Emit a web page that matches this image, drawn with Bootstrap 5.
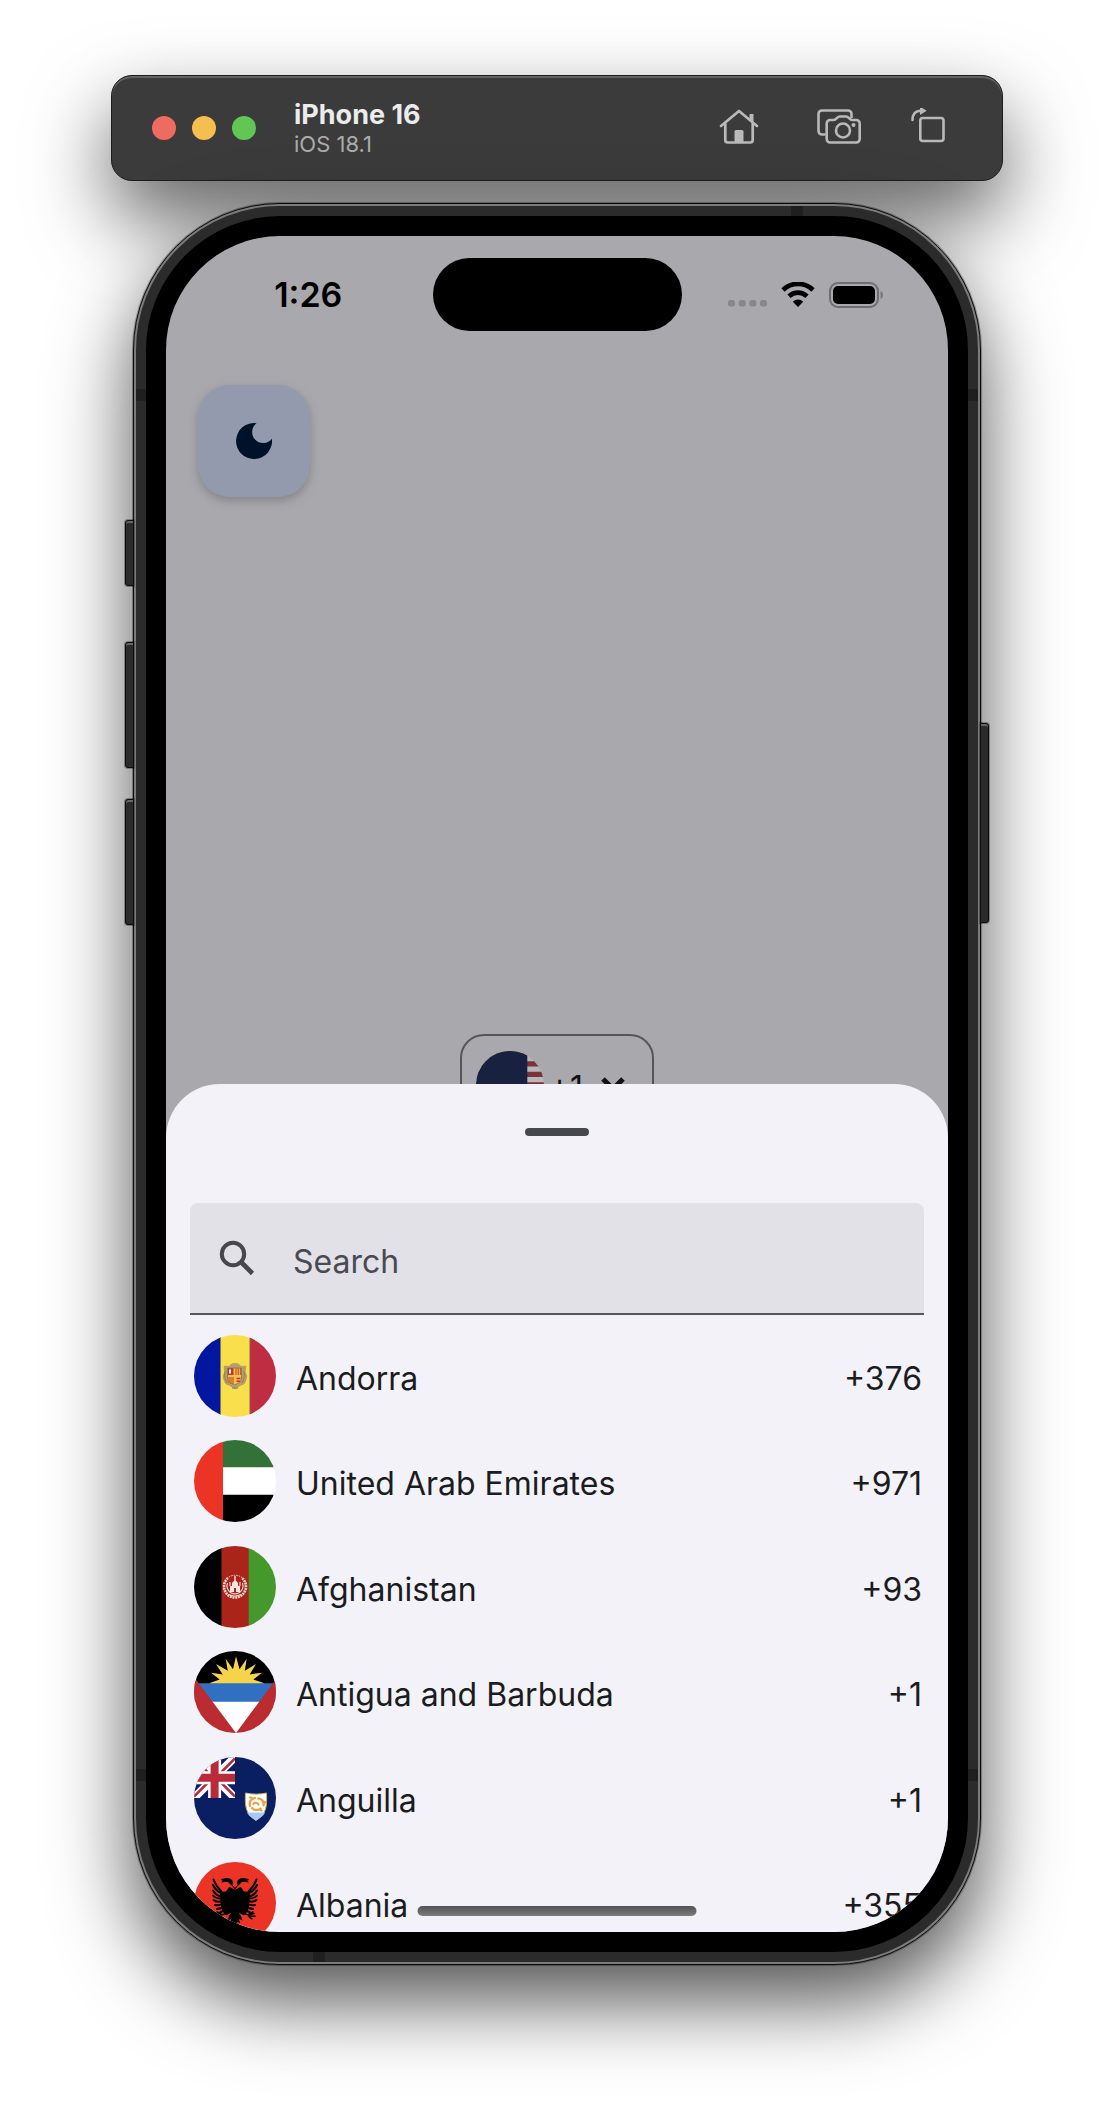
<!DOCTYPE html>
<html lang="en">
<head>
<meta charset="utf-8">
<meta name="viewport" content="width=device-width, initial-scale=1">
<title>iPhone 16 simulator – country picker</title>
<link href="https://cdn.jsdelivr.net/npm/bootstrap@5.3.0/dist/css/bootstrap.min.css" rel="stylesheet">
<style>
  body { font-family: Inter, "Liberation Sans", sans-serif; background: #fff; color: #1b1c20; }
  .stage { padding: 75px 0 150px; overflow: hidden; }
  .simbar { max-width: 892px; height: 106px; padding: 0 57px 0 40px; border-radius: 21px; background: #3b3b3b;
    border: 1px solid #1c1c1c; box-shadow: inset 0 2px 0 #636363, 0 36px 80px rgba(0,0,0,.62); }
  .simbar .btn { --bs-btn-padding-x: 0; --bs-btn-padding-y: 0; border: 0; line-height: 1; color: #b9b9b9; }
  .light { width: 24px; height: 24px; }
  .light-r { background: #ed6b60; } .light-y { background: #f5bf4f; } .light-g { background: #62c655; }
  .device { margin-left: 38px; }
  .device-name { font-size: 27px; line-height: 32px; color: #ececec; }
  .device-os { font-size: 22px; line-height: 26px; color: #ababab; }
  .sim-tools { gap: 50px; }

  .phone { max-width: 848px; margin-top: 22px; padding: 2px; background: #7b7b7b; border: 1px solid #0c0c0c;
    border-radius: 147px; box-shadow: 0 0 0 1px rgba(0,0,0,.3), 0 36px 80px rgba(0,0,0,.68); }
  .shell { border: 10px solid #2b2b2b; border-radius: 144px; background: #000; padding: 20px; }
  .display { aspect-ratio: 782 / 1696; border-radius: 114px; background: #a9a8ad; overflow: hidden; }
  .hw { width: 9px; background: #2b2b2b; border: 1px solid #0c0c0c; box-shadow: 0 0 0 1px rgba(0,0,0,.3), inset 0 2px 0 #666; }
  .hw-left { left: -9px; border-radius: 3px 0 0 3px; }
  .hw-right { right: -9px; border-radius: 0 3px 3px 0; }
  .hw-action { top: 316px; height: 66px; }
  .hw-up { top: 438px; height: 126px; }
  .hw-down { top: 595px; height: 126px; }
  .hw-power { top: 519px; height: 200px; }
  .band { background: #1f1f1f; }
  .band-side { width: 10px; height: 12px; }
  .band-edge { width: 12px; height: 10px; }
  .band-l { left: 2px; } .band-r { right: 2px; }
  .band-hi { top: 185px; } .band-lo { bottom: 183px; }
  .band-top { top: 2px; right: 177px; } .band-bottom { bottom: 2px; left: 179px; }

  .statusbar { padding-top: 22px; color: #000; }
  .clock { font-size: 34px; font-weight: 600; line-height: 40px; padding-left: 18px; }
  .island { width: 249px; height: 73px; background: #000; }
  .signals { padding-right: 18px; gap: 14px; }
  .app { height: 848px; }
  .theme-row { padding: 54px 32px 0; }
  .theme-btn { width: 112px; height: 112px; border: 0; border-radius: 32px; background: #939aad; color: #00112a; box-shadow: 0 4px 10px rgba(90,90,90,.45); }
  .theme-btn:hover { background: #8a92a6; }
  .pill { height: 102px; padding: 0 27px 0 14px; border: 2px solid #55555b; border-radius: 24px; background: transparent; font-size: 32px; color: #111216; margin-bottom: -52px; }
  .pill span { padding: 6px 18px 0 5px; }

  .sheet { background: #f3f2f9; border-radius: 54px 54px 0 0; padding: 44px 24px 0; }
  .grip { width: 64px; height: 8px; background: #47484d; margin: 0 auto 67px; }
  .searchbox { height: 112px; background: #e2e1e7; border-bottom: 2px solid #55575b; border-radius: 8px 8px 0 0; padding-left: 29px; color: #47484c; }
  .searchbox .form-control { background: transparent; border: 0; border-radius: 0; box-shadow: none; font-size: 32px; line-height: 40px; color: #1b1c20; padding: 8px 0 0 38px; }
  .searchbox .form-control::placeholder { color: #4a4b50; opacity: 1; }
  .countries { margin-top: 8px; height: 633px; flex-shrink: 0; }
  .country { border: 0; background: transparent; padding: 0 0 0 4px; font-size: 32px; line-height: 40px; color: #1b1c20; }
  .country .label { padding: 6px 0 0 20px; }
  .country .code { padding: 6px 2px 0 0; }
  .flag { width: 82px; height: 82px; }
  .flag-sm { width: 68px; height: 68px; }
  .homebar { width: 279px; height: 10px; bottom: 16px; background: linear-gradient(#535355, #7b7b7d); }
</style>
</head>
<body>
<main class="stage d-flex flex-column align-items-center">

  <header class="simbar w-100 d-flex align-items-center">
    <div class="d-flex gap-3">
      <span class="light light-r rounded-circle"></span>
      <span class="light light-y rounded-circle"></span>
      <span class="light light-g rounded-circle"></span>
    </div>
    <div class="device">
      <div class="device-name fw-bold">iPhone 16</div>
      <div class="device-os">iOS 18.1</div>
    </div>
    <div class="sim-tools d-flex ms-auto">
      <button class="btn" type="button" aria-label="Home">
        <svg width="48" height="40" viewBox="0 0 48 40" fill="none" stroke="currentColor" stroke-width="2.7" stroke-linecap="round" stroke-linejoin="round">
          <path d="M2 18 20 3 38 18M6.300 15v17a2.500 2.500 0 0 0 2.500 2.500h22.400a2.500 2.500 0 0 0 2.500-2.500V15"/>
          <path d="M30.500 6.500a.5.500 0 0 1 .5-.5h3a.5.500 0 0 1 .5.500V15l-4-3z" fill="currentColor" stroke="none"/><path d="M15.500 35V23.500a1.500 1.500 0 0 1 1.500-1.500h6a1.500 1.500 0 0 1 1.500 1.500V35z" fill="currentColor" stroke="none"/>
        </svg>
      </button>
      <button class="btn" type="button" aria-label="Screenshot">
        <svg width="44" height="40" viewBox="0 0 44 40" fill="none" stroke="currentColor" stroke-width="2.600" stroke-linejoin="round">
          <path d="M8.500 26.500H5A3.500 3.500 0 0 1 1.500 23V6A3.500 3.500 0 0 1 5 2.500h26A3.500 3.500 0 0 1 34.500 6v4"/>
          <path d="M13.200 12h3.500c2.800 0 3.500-3.500 6-3.500h6.500c2.500 0 3.200 3.500 6 3.500h4a3.500 3.500 0 0 1 3.500 3.500V31a3.500 3.500 0 0 1-3.500 3.500h-26A3.500 3.500 0 0 1 9.700 31V15.500a3.500 3.500 0 0 1 3.500-3.500z"/>
          <circle cx="26" cy="22.500" r="7"/><circle cx="36.500" cy="17" r="2" fill="currentColor" stroke="none"/>
        </svg>
      </button>
      <button class="btn" type="button" aria-label="Rotate">
        <svg width="34" height="40" viewBox="0 0 34 40" fill="none" stroke="currentColor" stroke-width="2.600" stroke-linecap="round">
          <rect x="9.300" y="10" width="23.200" height="23" rx="2.500"/>
          <path d="M1.500 12C1.300 6.500 4 2.800 10 2.800"/><path d="M9-1.500 15.700 2.800 9 7z" fill="currentColor" stroke="none"/>
        </svg>
      </button>
    </div>
  </header>

  <section class="phone w-100 position-relative">
    <span class="hw hw-left hw-action position-absolute"></span>
    <span class="hw hw-left hw-up position-absolute"></span>
    <span class="hw hw-left hw-down position-absolute"></span>
    <span class="hw hw-right hw-power position-absolute"></span>
    <div class="shell">
      <div class="display position-relative d-flex flex-column">
        <div class="app d-flex flex-column flex-shrink-0">
          <div class="statusbar d-flex align-items-center">
            <div class="clock col text-center">1:26</div>
            <div class="island rounded-pill"></div>
            <div class="signals col d-flex justify-content-center align-items-center">
              <svg width="39" height="26" viewBox="0 0 39 26" fill="#87868a"><rect y="18" width="7" height="6.500" rx="2.500"/><rect x="10.700" y="18" width="7" height="6.500" rx="2.500"/><rect x="21.300" y="18" width="7" height="6.500" rx="2.500"/><rect x="32" y="18" width="7" height="6.500" rx="2.500"/></svg>
              <svg width="34" height="26" viewBox="0 0 34 26"><path d="M2 8a21.500 21.500 0 0 1 30 0M8 14.200a13 13 0 0 1 18 0" fill="none" stroke="#000" stroke-width="4.800"/><path d="M17 25 11.800 19.700a7.500 7.500 0 0 1 10.400 0z"/></svg>
              <svg width="55" height="28" viewBox="0 0 55 28"><rect x="1" y="2" width="48" height="24" rx="8" fill="none" stroke="#6e6d71" stroke-width="2"/><rect x="4" y="5" width="42" height="18" rx="5"/><path d="M51.500 10c3.300 1.200 3.300 6.800 0 8z" fill="#77767a"/></svg>
            </div>
          </div>
          <div class="theme-row">
            <button class="theme-btn d-flex align-items-center justify-content-center" type="button" aria-label="Dark mode">
              <svg width="36" height="36" viewBox="0 0 36 36" fill="currentColor"><path d="M20.600.200A18 18 0 1 0 35.900 15.700 11 11 0 1 1 20.600.200z"/></svg>
            </button>
          </div>
          <button class="pill mt-auto mx-auto d-flex align-items-center flex-shrink-0" type="button" aria-label="Country code +1">
            <svg class="flag-sm rounded-circle" viewBox="0 0 68 68"><path fill="#b7b6ba" d="M0 0h68v68H0z"/><path stroke="#7c3236" stroke-width="5.300" d="M0 2.300h68M0 12.800h68M0 23.300h68M0 33.800h68M0 44.300h68M0 54.800h68M0 65.300h68"/><path fill="#18213f" d="M0 0h51.300v37H0z"/></svg>
            <span>+1</span>
            <svg width="24" height="16" viewBox="0 0 24 16" fill="none" stroke="currentColor" stroke-width="5"><path d="m2 2 10 10L22 2"/></svg>
          </button>
        </div>

        <section class="sheet position-relative flex-grow-1 d-flex flex-column" aria-label="Select country">
          <div class="grip rounded-pill flex-shrink-0"></div>
          <div class="searchbox d-flex align-items-center flex-shrink-0">
            <label for="country-search"><svg width="36" height="36" viewBox="0 0 36 36" fill="none" stroke="currentColor" stroke-width="4"><circle cx="14" cy="14" r="11.200"/><path d="m22 22 11.500 11.500" stroke-width="4.600"/></svg></label>
            <input id="country-search" class="form-control" type="text" placeholder="Search">
          </div>
          <div class="countries list-group list-group-flush">
            <button type="button" class="country list-group-item list-group-item-action d-flex align-items-center flex-fill">
              <svg class="flag rounded-circle" viewBox="0 0 82 82">
                <path fill="#0216a0" d="M0 0h27v82H0z"/><path fill="#f9df4b" d="M26.500 0H56v82H26.500z"/><path fill="#be2d41" d="M56 0h26v82H56z"/><path stroke="#8a7a3c" stroke-width=".8" d="M26.500 0v82M55.800 0v82"/>
                <path fill="#b7a068" d="M30 31c3-1 4 1 6-1s4-2 5-2 3 0 5 2 3 0 6 1c1 3-1 4 0 7 2 3 1 5 0 8-1 4-4 4-6 5s-3 3-5 3-3-2-5-3-5-1-6-5c-1-3-2-5 0-8 1-3-1-4 0-7z"/>
                <path fill="#f2c14a" d="M33.500 33h14v10c0 4-3 5-7 7-4-2-7-3-7-7z"/><path fill="#c8312b" d="M33.500 33h6v7h-6z"/><path fill="#fff" d="M35 34.500h2v4h-2z"/>
                <path stroke="#d05a2a" stroke-width="1.300" d="M42 33v7M44.300 33v7M46.500 33v7M35 42v6M37 42v7M39 42v7"/><path stroke="#c8312b" stroke-width="1.500" d="M42.500 43.500h4M42.500 46.200h4"/><path stroke="#8b7a4c" fill="none" stroke-width=".9" d="M33.500 33h14v10c0 4-3 5-7 7-4-2-7-3-7-7zM31 36c-1 4 0 9 2 12M50 36c1 4 0 9-2 12M38 53h6"/>
              </svg>
              <span class="label">Andorra</span><span class="code ms-auto">+376</span>
            </button>
            <button type="button" class="country list-group-item list-group-item-action d-flex align-items-center flex-fill">
              <svg class="flag rounded-circle" viewBox="0 0 82 82"><path fill="#fff" d="M0 0h82v82H0z"/><path fill="#327238" d="M28 0h54v27.300H28z"/><path d="M28 54.700h54V82H28z"/><path fill="#eb3425" d="M0 0h29v82H0z"/></svg>
              <span class="label">United Arab Emirates</span><span class="code ms-auto">+971</span>
            </button>
            <button type="button" class="country list-group-item list-group-item-action d-flex align-items-center flex-fill">
              <svg class="flag rounded-circle" viewBox="0 0 82 82"><path d="M0 0h28v82H0z"/><path fill="#ab241a" d="M27.500 0H55v82H27.500z"/><path fill="#45982b" d="M54.700 0H82v82H54.700z"/>
                <g fill="none" stroke="#ecd2cc"><path stroke-width="2.600" stroke-dasharray="2 .7" d="M34 32a11 11 0 1 0 14 0"/><path stroke-width="1" stroke-dasharray="1.500 1" d="M33 32.500a11.500 11.500 0 0 1 16 0"/><path stroke-width="1.200" d="M33.500 37a8 8 0 1 0 15 0M35 48.500c4 2 8 2 12 0M36 36v4M46 36v4"/></g>
                <path fill="#f5e6e2" d="M36 46v-6h2v-3l3-3.500 3 3.500v3h2v6zM40.300 30h1.400v4h-1.400z"/><path fill="#ab241a" d="M40 42h2v4h-2z"/>
              </svg>
              <span class="label">Afghanistan</span><span class="code ms-auto">+93</span>
            </button>
            <button type="button" class="country list-group-item list-group-item-action d-flex align-items-center flex-fill">
              <svg class="flag rounded-circle" viewBox="0 0 82 82"><path d="M0 0h82v33H0z"/><path fill="#f6d44a" d="m15.700 32 10-3.400L17 21.700l11.700 1.700L22 13l11.800 6.700-2.100-12 7.300 10.500L42 5.300l3.500 12.900 7.200-10.500-1.900 12L62 13l-6.300 10.400L68 21.700l-8.700 6.900L69.700 32v1h-54z"/><path fill="#2f70c1" d="M0 32.300h82V51H0z"/><path fill="#fff" d="M0 50.800h82V82H0z"/><path fill="#bb2c30" d="M0 26l42 56H0zM83.500 26 42 82h41.500z"/></svg>
              <span class="label">Antigua and Barbuda</span><span class="code ms-auto">+1</span>
            </button>
            <button type="button" class="country list-group-item list-group-item-action d-flex align-items-center flex-fill">
              <svg class="flag rounded-circle" viewBox="0 0 82 82"><path fill="#0a1f62" d="M0 0h82v82H0z"/>
                <svg width="41" height="41" viewBox="0 0 41 41"><path stroke="#fff" stroke-width="8" d="m0 0 41 41M41 0 0 41"/><path stroke="#b92b39" stroke-width="2.600" d="M0 1.500l20 20M21 19.500l20 20M41 1.500l-20 20M20 19.500l-20 20"/><path stroke="#fff" stroke-width="13" d="M20.600 0v41M0 20.700h41"/><path stroke="#b92b39" stroke-width="8" d="M20.600 0v41M0 20.700h41"/></svg>
                <path fill="#fff" stroke="#c9b05a" stroke-width="1" d="M51.500 36c7 1.500 14 1.500 21 0 .5 12 .5 21-10.500 27.500C51 57 51 48 51.500 36z"/><path fill="#a4cbf7" d="M53 55.500h18.200c-1.700 3-5 5.500-9.200 7.500-4.200-2-7.500-4.500-9-7.500z"/>
                <path fill="none" stroke="#f0a03c" stroke-width="2.200" stroke-linecap="round" d="M56 49c-1-4 1-7 5-8M58.500 41l-2.500-.5M64 41.500c4 0 6 3 5.500 7M70 47l1-2M66.500 51.500c-3 2.500-6.500 2-8.500-.5M66 52.500l1.500 1M59.500 47c1.500-2 4-1.500 5 .5"/>
              </svg>
              <span class="label">Anguilla</span><span class="code ms-auto">+1</span>
            </button>
            <button type="button" class="country list-group-item list-group-item-action d-flex align-items-center flex-fill">
              <svg class="flag rounded-circle" viewBox="0 0 82 82"><path fill="#eb3425" d="M0 0h82v82H0z"/>
                <defs><g id="half-eagle">
                  <path d="M41.200 28c-1-2-2-2.500-3-4-1.500-1-3-3-4-4l-3.500-.3-3.500 1 1.500-2.200-2-.5c3-2.500 9-2.800 11.500.3 1.500 2.200-.5 4 1 5.700.8.800 2 1.500 2 3v40l-3.500-4 1.500-3-3.500 1 1.500-4-4 1.500c2-3 3-5 4-8l-5 3c-3-2-5-7-5.500-12-.3-5-.2-9-1.500-14 2 2 4 2.500 6 2 2.500-.5 2-3.500 4.500-4.500z"/>
                  <path fill="none" stroke="#000" stroke-width="2" stroke-linecap="round" d="M27 29c-3-3-6-7-7.500-11.500M27 31c-3-1-6-4-8-8M27 34c-3 0-6-2-8-5.500M27 36.500c-3 0-6-.5-8-3M28 39c-3 1-6 1-8.500-1M29 41.500c-3 2-5 2-8 1.500M30 44c-2 2-4 3-7 3M32 46c-2 2-3 3.500-6 4.500"/>
                  <path fill="none" stroke="#000" stroke-width="1.500" stroke-linecap="round" d="M34 49c-3 4-6 4.500-12 2.500M28 53c-2 1-4 1.500-7 1.200M28 53c-1 2-2 3-4 3.800M28 53l-5-3M35 56c1-3 2-4 4-6"/></g></defs>
                <use href="#half-eagle"/><use href="#half-eagle" transform="matrix(-1 0 0 1 82 0)"/></svg>
              <span class="label">Albania</span><span class="code ms-auto">+355</span>
            </button>
          </div>
        </section>
        <div class="homebar rounded-pill position-absolute start-50 translate-middle-x"></div>
      </div>
    </div>
    <span class="band band-side band-l band-hi position-absolute"></span>
    <span class="band band-side band-r band-hi position-absolute"></span>
    <span class="band band-side band-l band-lo position-absolute"></span>
    <span class="band band-side band-r band-lo position-absolute"></span>
    <span class="band band-edge band-top position-absolute"></span>
    <span class="band band-edge band-bottom position-absolute"></span>
  </section>
</main>
<script src="https://cdn.jsdelivr.net/npm/bootstrap@5.3.0/dist/js/bootstrap.bundle.min.js"></script>
</body>
</html>
